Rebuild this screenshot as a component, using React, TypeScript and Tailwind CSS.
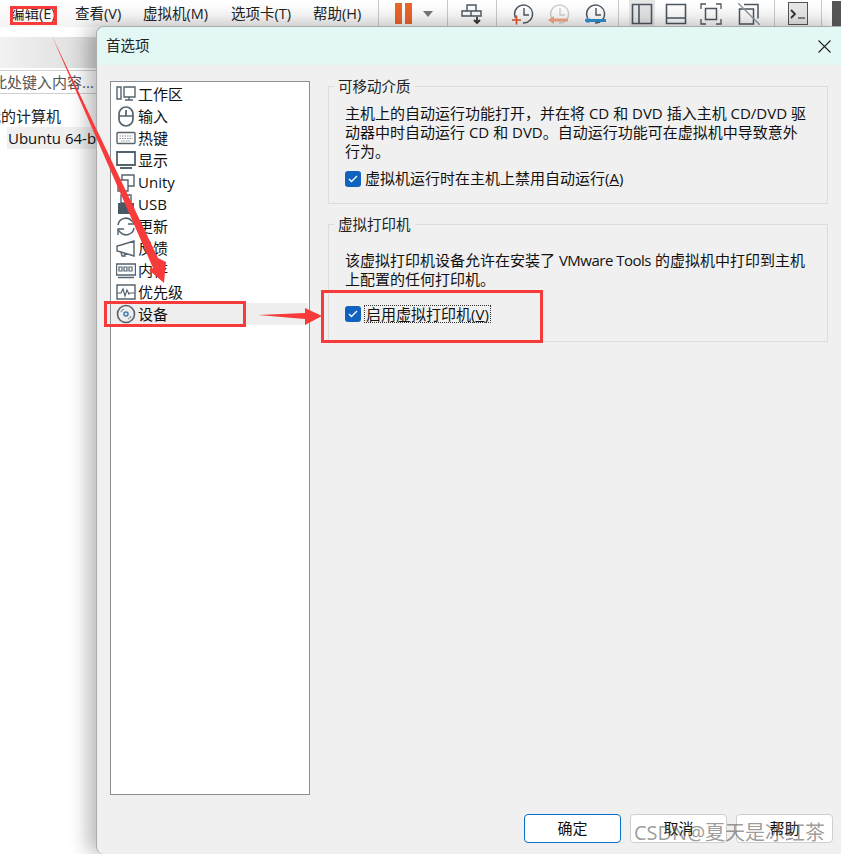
import React from "react";

const FONT = "font-['Open_Sans','Noto_Sans_CJK_SC','Liberation_Sans',sans-serif]";
const UI = "text-[15px] leading-[19px] text-[#111]";

function Sep({ className = "" }: { className?: string }) {
  return <div className={`w-px h-[27px] bg-[#c8c8c8] ${className}`} />;
}

function ToolIcon({ children, w = 22 }: { children: React.ReactNode; w?: number }) {
  return (
    <svg width={w} height="22" viewBox={`0 0 ${w} 22`} fill="none" className="shrink-0">
      {children}
    </svg>
  );
}

function Clock({ color = "#4b5660" }: { color?: string }) {
  return (
    <>
      <path d="M3.500 15a9 9 0 1 1 7.500 5" stroke={color} strokeWidth="1.400" />
      <path d="M12 5v7h5" stroke={color} strokeWidth="1.400" />
    </>
  );
}

function Toolbar() {
  return (
    <div className="h-[27px] flex items-center bg-gradient-to-b from-white to-[#f4f4f4] text-[14.5px] text-[#222]">
      <div className="flex items-center pl-[10px] w-[378px] shrink-0">
        <span className="w-[65px]">编辑(E)</span>
        <span className="w-[68px]">查看(V)</span>
        <span className="w-[88px]">虚拟机(M)</span>
        <span className="w-[82px]">选项卡(T)</span>
        <span>帮助(H)</span>
      </div>
      <Sep />
      <div className="flex gap-[3px] ml-[16px]">
        <div className="w-[7px] h-[21px] bg-[#e8642a]" />
        <div className="w-[7px] h-[21px] bg-[#e8642a]" />
      </div>
      <div className="ml-[11px] w-0 h-0 border-x-[5px] border-x-transparent border-t-[6px] border-t-[#777]" />
      <Sep className="ml-[14px]" />
      <div className="ml-[13px]">
        <ToolIcon>
          <path d="M6 2h9v6H6zM1 8h9v5H1zM10 8h10v5H10z" stroke="#4b5660" strokeWidth="1.400" />
          <path d="M16 14v5M13 17l3 3 3-3" stroke="#333" strokeWidth="1.800" />
        </ToolIcon>
      </div>
      <Sep className="ml-[13px]" />
      <div className="ml-[15px]">
        <ToolIcon>
          <Clock />
          <path d="M0 17h9M4.500 12.500v9" stroke="#d9532b" strokeWidth="1.600" />
        </ToolIcon>
      </div>
      <div className="ml-[14px]">
        <ToolIcon>
          <Clock color="#c9cdd0" />
          <path d="M5 17h15" stroke="#f0a585" strokeWidth="3" />
          <path d="M0 17l6-4v8z" fill="#f0a585" />
        </ToolIcon>
      </div>
      <div className="ml-[14px]">
        <ToolIcon>
          <Clock />
          <path d="M1 17c2-3 4-1 6-1h15v3H7c-2 0-4 2-6-1" fill="#2f8fcf" />
        </ToolIcon>
      </div>
      <Sep className="ml-[12px]" />
      <div className="ml-[10px] h-[27px] w-[30px] bg-[#e6e6e6] flex items-center justify-center">
        <ToolIcon>
          <path d="M8 2h12v18H8z" fill="#dfe1e3" />
          <path d="M1.500 1.500h19v19h-19zM8 1.500v19" stroke="#4b5660" strokeWidth="1.600" />
        </ToolIcon>
      </div>
      <div className="ml-[10px]">
        <ToolIcon>
          <path d="M1.500 1.500h19v19h-19zM1.500 15h19" stroke="#4b5660" strokeWidth="1.600" />
        </ToolIcon>
      </div>
      <div className="ml-[13px]">
        <ToolIcon>
          <path d="M1 6V1h5M16 1h5v5M21 16v5h-5M6 21H1v-5" stroke="#4b5660" strokeWidth="1.300" />
          <path d="M5.500 5.500h11v11h-11z" stroke="#4b5660" strokeWidth="1.500" />
        </ToolIcon>
      </div>
      <div className="ml-[16px]">
        <ToolIcon>
          <path d="M6 1.500h14v14M1.500 6h14v15h-14z" stroke="#4b5660" strokeWidth="1.500" />
          <path d="M0 0l22 22" stroke="#8f979e" strokeWidth="1.400" />
        </ToolIcon>
      </div>
      <Sep className="ml-[14px]" />
      <div className="ml-[13px] h-[23px] w-[23px] bg-[#e6e6e6] border border-[#555] flex items-center justify-center">
        <svg width="18" height="14" viewBox="0 0 18 14" fill="none">
          <path d="M2 3l4 4-4 4" stroke="#333" strokeWidth="1.800" />
          <path d="M9 11h7" stroke="#555" strokeWidth="1.400" />
        </svg>
      </div>
      <Sep className="ml-[13px]" />
      <div className="ml-[10px] h-[25px] w-[10px] bg-[#555]" />
    </div>
  );
}

function Library() {
  return (
    <div className="w-[96px] shrink-0 overflow-hidden bg-white">
      <div className="h-[10px]" />
      <div className="h-[31px] bg-gradient-to-r from-[#f2f2f2] to-[#dcdcdc]" />
      <div className="mt-[2px] h-[24px] pt-px border-y border-[#d0d0d0] flex items-center whitespace-nowrap text-[15px] text-[#555]">
        <span className="-ml-[23px]">在此处键入内容...</span>
      </div>
      <div className="mt-[11px] h-[22px] flex items-center whitespace-nowrap text-[15px] text-[#222]">
        <span className="-ml-[14px]">我的计算机</span>
      </div>
      <div className="h-[22px] ml-[7px] bg-[#f0f0f0] flex items-center whitespace-nowrap text-[15px] text-[#111]">
        <span className="w-[2px] h-[12px] bg-[#5a9e3a] mr-[1px]" />
        Ubuntu 64-bit
      </div>
    </div>
  );
}

const S = { stroke: "#55636e", strokeWidth: 1.400 };

const ROWS: { label: string; icon: React.ReactNode }[] = [
  {
    label: "工作区",
    icon: <path d="M1 3h4v12H1zM8 3h11v10H8zM13 13v3M9 16h8" {...S} />,
  },
  {
    label: "输入",
    icon: <path d="M3 8a7 7 0 0 1 14 0v5a7 7 0 0 1-14 0zM3 10h14M10 4v6" {...S} strokeWidth={1.700} />,
  },
  {
    label: "热键",
    icon: (
      <>
        <rect x="1" y="4.500" width="18" height="11" rx="1" {...S} />
        <path d="M3.500 8h13M3.500 10.500h13M5 13h10" stroke="#8a949c" strokeWidth="1.200" strokeDasharray="1.500 1" />
      </>
    ),
  },
  {
    label: "显示",
    icon: (
      <>
        <path d="M1 2h18v13H1z" {...S} strokeWidth={1.800} />
        <path d="M4 18h12" stroke="#55636e" strokeWidth="2.200" />
      </>
    ),
  },
  {
    label: "Unity",
    icon: <path d="M2 8h10v11H2zM6 8V3h12v11h-6" {...S} />,
  },
  {
    label: "USB",
    icon: (
      <>
        <path d="M5 1h10v8H5z" {...S} />
        <path d="M2 9h16v11H2z" fill="#4a5864" />
      </>
    ),
  },
  {
    label: "更新",
    icon: (
      <>
        <path d="M2 9a8 8 0 0 1 14-4l2 2M18 12a8 8 0 0 1-14 4l-2-2" {...S} strokeWidth={1.600} />
        <path d="M18 2v6h-6M2 19v-6h6" {...S} />
      </>
    ),
  },
  {
    label: "反馈",
    icon: <path d="M1 8v5l4 1 13 4V3L5 7zM5 14l1 4h3l-1-3" {...S} />,
  },
  {
    label: "内存",
    icon: (
      <>
        <path d="M0.500 4h19v11H0.500zM2 17.500h16" {...S} />
        <path d="M3 7h3v4H3zM8 7h3v4H8zM13 7h3v4h-3z" stroke="#55636e" strokeWidth="1.200" />
      </>
    ),
  },
  {
    label: "优先级",
    icon: (
      <>
        <path d="M1 3h18v14H1z" {...S} />
        <path d="M1 11h4l2-4 2 7 2-6 2 4 1-1h5" stroke="#55636e" strokeWidth="1.200" />
      </>
    ),
  },
  {
    label: "设备",
    icon: (
      <>
        <circle cx="10" cy="10" r="8.500" {...S} strokeWidth={1.600} />
        <circle cx="10" cy="10" r="2" stroke="#3f7fb5" strokeWidth="1.600" />
        <path d="M5 8a5 5 0 0 1 3-3M15 12a5 5 0 0 1-3 3" stroke="#8a949c" strokeWidth="1.200" />
      </>
    ),
  },
];

function CategoryList() {
  return (
    <div className="w-[200px] h-[714px] shrink-0 bg-white border border-[#8a8f96] pt-px">
      {ROWS.map((row) => (
        <div
          key={row.label}
          className={`h-[22px] flex items-center pl-[5px] gap-[2px] text-[15px] text-[#111] ${
            row.label === "设备" ? "bg-[#eeeeee] mr-px" : ""
          }`}
        >
          <svg width="20" height="21" viewBox="0 0 20 21" fill="none" className="shrink-0">
            {row.icon}
          </svg>
          {row.label}
        </div>
      ))}
    </div>
  );
}

function CheckBox() {
  return (
    <div className="w-4 h-4 rounded-[3px] bg-[#0f62bd] flex items-center justify-center shrink-0">
      <svg width="10" height="8" viewBox="0 0 10 8" fill="none">
        <path d="M1 4l2.500 2.500L9 1" stroke="white" strokeWidth="1.300" />
      </svg>
    </div>
  );
}

function Group({ title, children }: { title: string; children: React.ReactNode }) {
  return (
    <fieldset className="border border-[#dcdcdc] h-[128px] pl-[16px] pr-[16px]">
      <legend className="-ml-[11px] px-[4px] pt-[2px] text-[14.5px] leading-[18px] text-[#222]">{title}</legend>
      {children}
    </fieldset>
  );
}

function Button({ label, primary = false }: { label: string; primary?: boolean }) {
  return (
    <button
      className={`w-[97px] h-[29px] rounded-[4px] bg-white text-[15px] text-[#111] border ${
        primary ? "border-[#0a6fc7]" : "border-[#cfcfcf]"
      }`}
    >
      {label}
    </button>
  );
}

function Dialog() {
  return (
    <div className="flex-1 min-w-0 -mt-px flex flex-col rounded-tl-[8px] rounded-bl-[8px] overflow-hidden bg-[#f0f0f0] border-l border-t border-[#ababab] shadow-[-8px_0_20px_rgba(0,0,0,0.28)]">
      <div className="h-[38px] shrink-0 bg-[#e3f7f5] flex items-center justify-between pl-[9px] pr-[10px]">
        <span className="text-[14.5px] text-[#222]">首选项</span>
        <svg width="13" height="13" viewBox="0 0 13 13" fill="none">
          <path d="M0.500 0.500l12 12M12.500 0.500l-12 12" stroke="#222" strokeWidth="1.100" />
        </svg>
      </div>
      <div className="flex-1 flex flex-col pl-[13px] pr-[13px] pt-[16px]">
        <div className="flex gap-[18px]">
          <CategoryList />
          <div className="flex-1 flex flex-col gap-[10px] -mt-[5px]">
            <Group title="可移动介质">
              <p className={`${UI} mt-[8px]`}>
                主机上的自动运行功能打开，并在将 CD 和 DVD 插入主机 CD/DVD 驱
                <br />
                动器中时自动运行 CD 和 DVD。自动运行功能可在虚拟机中导致意外
                <br />
                行为。
              </p>
              <div className={`${UI} flex items-center gap-[4px] mt-[8px]`}>
                <CheckBox />
                <span>
                  虚拟机运行时在主机上禁用自动运行(<u>A</u>)
                </span>
              </div>
            </Group>
            <Group title="虚拟打印机">
              <p className={`${UI} mt-[17px]`}>
                该虚拟打印机设备允许在安装了 <span className="tracking-[-0.5px]">VMware Tools</span> 的虚拟机中打印到主机
                <br />
                上配置的任何打印机。
              </p>
              <div className={`${UI} flex items-center gap-[3px] mt-[16px]`}>
                <CheckBox />
                <span className="h-[18px] flex items-center border border-dotted border-[#333] px-px whitespace-pre">
                  启用虚拟打印机(<u>V</u>)
                </span>
              </div>
            </Group>
          </div>
        </div>
        <div className="flex justify-end gap-[9px] mt-[19px] -mr-[5px]">
          <Button label="确定" primary />
          <Button label="取消" />
          <Button label="帮助" />
        </div>
      </div>
    </div>
  );
}

function Annotations() {
  return (
    <>
      <div className="absolute left-[10px] top-[6px] w-[47px] h-[19px] border-[3px] border-[#f73b3b]" />
      <div className="absolute left-[104px] top-[301px] w-[142px] h-[26px] border-[3px] border-[#f73b3b]" />
      <div className="absolute left-[321px] top-[290px] w-[222px] h-[53px] border-[3px] border-[#f73b3b]" />
      <svg width="841" height="854" className="absolute left-0 top-0 pointer-events-none">
        <polygon points="52,36 158,258 166,262 164,283 149,270 153,268" fill="#f73b3b" />
        <polygon points="258,315 305,313 305,308 322,316 305,325 305,319" fill="#f73b3b" />
      </svg>
      <div className="absolute left-[634px] top-[820px] text-[20px] leading-[26px] text-[rgba(90,90,90,0.62)] whitespace-nowrap">
        CSDN@夏天是冰红茶
      </div>
    </>
  );
}

export default function App() {
  return (
    <div className={`relative w-[841px] h-[854px] overflow-hidden bg-white flex flex-col ${FONT}`}>
      <Toolbar />
      <div className="flex-1 min-h-0 flex">
        <Library />
        <Dialog />
      </div>
      <Annotations />
    </div>
  );
}
